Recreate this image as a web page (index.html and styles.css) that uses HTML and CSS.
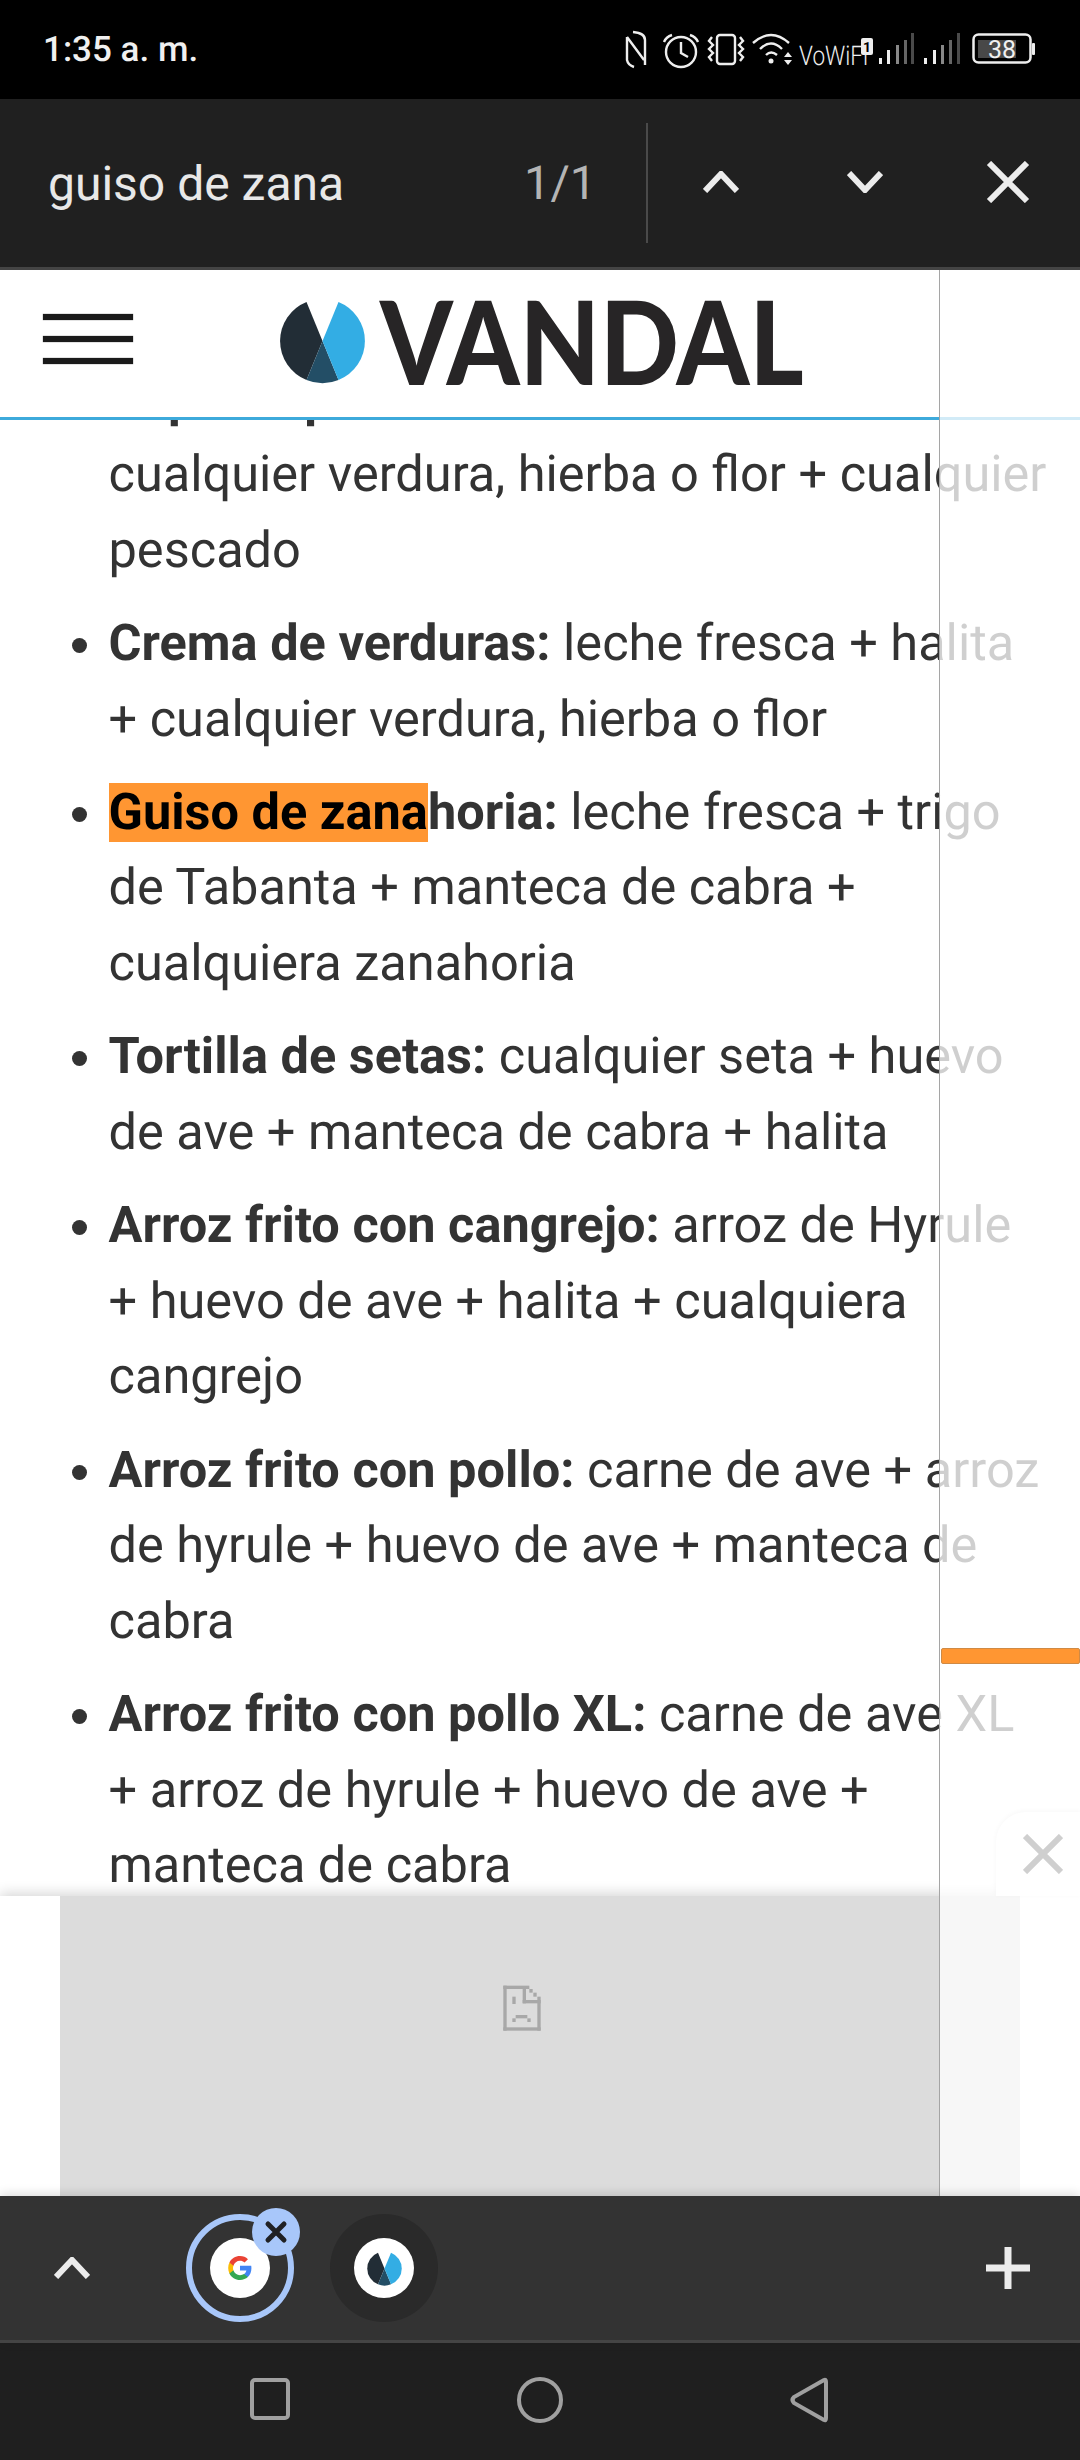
FILE: index.html
```html
<!DOCTYPE html>
<html lang="es">
<head>
<meta charset="utf-8">
<title>Vandal</title>
<link rel="stylesheet" href="styles.css">
</head>
<body>
<div class="phone">
  <div class="status">
    <span class="time">1:35 a. m.</span>
    <svg class="status-icons" viewBox="620 25 420 50" width="420" height="50">
      <g class="si">
        <path d="M627 37V60Q628 65 634 67M627 37L644 60M633 32Q645 33 645 40V65"/>
        <circle cx="681" cy="52" r="15"/>
        <path d="M681 42V53L688 57M664 42Q666 37 672 35M698 42Q696 37 690 35"/>
        <rect x="717" y="35" width="18" height="29" rx="3"/>
        <path d="M712 37L709 41L713 45L709 49L713 53L709 57L712 61M740 37L743 41L739 45L743 49L739 53L743 57L740 61"/>
        <path d="M753 43Q771 27 789 43M760 49Q771 38 782 49M766 55Q771 50 777 55"/>
      </g>
      <circle class="sf" cx="771" cy="61" r="2.5"/>
      <path class="sf" d="M788 52L792 57H784ZM788 65L792 60H784Z"/>
      <text class="vowifi" x="799" y="65" textLength="69" lengthAdjust="spacingAndGlyphs">VoWiFi</text>
      <rect class="sf" x="861" y="38" width="12" height="17" rx="2"/>
      <text class="simnum" x="867" y="52">1</text>
      <g class="bars">
        <rect class="b1" x="879" y="58" width="3" height="6"/>
        <rect class="b1" x="887" y="50" width="3" height="14"/>
        <rect class="b2" x="896" y="45" width="3" height="19"/>
        <rect class="b3" x="904" y="40" width="3" height="24"/>
        <rect class="b4" x="911" y="33" width="3" height="31"/>
        <rect class="b1" x="924" y="58" width="3" height="6"/>
        <rect class="b1" x="933" y="50" width="3" height="14"/>
        <rect class="b2" x="941" y="45" width="3" height="19"/>
        <rect class="b3" x="949" y="40" width="3" height="24"/>
        <rect class="b4" x="957" y="33" width="3" height="31"/>
      </g>
      <rect class="batfill" x="978" y="40" width="38" height="18"/>
      <rect class="batbox" x="973.5" y="34.5" width="57" height="28" rx="5"/>
      <rect class="sf" x="1032" y="43" width="3" height="12" rx="1"/>
      <text class="batnum" x="1002" y="58">38</text>
    </svg>
  </div>

  <div class="findbar">
    <span class="query">guiso de zana</span>
    <span class="count">1/1</span>
    <span class="divider"></span>
    <svg class="fb-chev up" viewBox="0 0 36 22" width="36" height="22"><path d="M2 20L18 3L34 20"/></svg>
    <svg class="fb-chev down" viewBox="0 0 36 22" width="36" height="22"><path d="M2 2L18 19L34 2"/></svg>
    <svg class="fb-close" viewBox="0 0 44 42" width="44" height="42"><path d="M3 2L41 40M41 2L3 40"/></svg>
  </div>

  <div class="rule"></div>

  <main class="page">
    <header class="site-head">
      <div class="burger"><i></i><i></i><i></i></div>
      <div class="brand">
        <svg class="mark" viewBox="-43 -43 86 86" width="87" height="86">
          <path class="m-dark" d="M0 0L-16 -39A42 42 0 0 0 -16 39Z"/>
          <path class="m-mid" d="M0 0L-16 39A42 42 0 0 0 16 39Z"/>
          <path class="m-blue" d="M0 0L16 -39A42 42 0 0 1 16 39Z"/>
        </svg>
        <span class="wordmark">VANDAL</span>
      </div>
    </header>

    <ul class="recipes">
      <li><b>Sopa de pescado:</b> leche fresca + halita + cualquier verdura, hierba o flor + cualquier pescado</li>
      <li><b>Crema de verduras:</b> leche fresca + halita + cualquier verdura, hierba o flor</li>
      <li><b><mark class="hit">Guiso de zana</mark>horia:</b> leche fresca + trigo de Tabanta + manteca de cabra + cualquiera zanahoria</li>
      <li><b>Tortilla de setas:</b> cualquier seta + huevo de ave + manteca de cabra + halita</li>
      <li><b>Arroz frito con cangrejo:</b> arroz de Hyrule + huevo de ave + halita + cualquiera cangrejo</li>
      <li><b>Arroz frito con pollo:</b> carne de ave + arroz de hyrule + huevo de ave + manteca de cabra</li>
      <li><b>Arroz frito con pollo XL:</b> carne de ave XL + arroz de hyrule + huevo de ave + manteca de cabra</li>
    </ul>

    <aside class="ad">
      <div class="ad-close">
        <svg viewBox="0 0 40 40" width="40" height="40"><path d="M2 2L38 38M38 2L2 38"/></svg>
      </div>
      <div class="ad-slot">
        <svg class="broken" viewBox="0 0 300 300" width="100" height="100">
          <rect x="100" y="77" width="10" height="135"/>
          <rect x="100" y="77" width="78" height="10"/>
          <rect x="100" y="202" width="112" height="10"/>
          <rect x="202" y="110" width="10" height="102"/>
          <rect x="158" y="87" width="10" height="43"/>
          <rect x="158" y="120" width="54" height="10"/>
          <rect x="178" y="87" width="10" height="11"/>
          <rect x="190" y="98" width="10" height="12"/>
          <rect x="127" y="110" width="10" height="22"/>
          <rect x="137" y="165" width="35" height="10"/>
          <rect x="127" y="175" width="10" height="11"/>
          <rect x="172" y="175" width="10" height="11"/>
        </svg>
      </div>
    </aside>

    <div class="find-track"><span class="find-mark"></span></div>
  </main>

  <div class="tabstrip">
    <svg class="ts-chev" viewBox="0 0 36 22" width="36" height="22"><path d="M2 20L18 3L34 20"/></svg>
    <div class="tab active">
      <span class="fav">
        <svg viewBox="0 0 48 48" width="26" height="26">
          <path fill="#4285F4" d="M45.1 24.5c0-1.6-.1-3.1-.4-4.5H24v8.5h11.8c-.5 2.8-2.1 5.1-4.4 6.7v5.5h7.1c4.2-3.8 6.6-9.5 6.6-16.2z"/>
          <path fill="#34A853" d="M24 46c5.9 0 10.9-2 14.5-5.3l-7.1-5.5c-2 1.3-4.5 2.1-7.4 2.1-5.7 0-10.5-3.8-12.2-9H4.5v5.7C8.1 41.1 15.5 46 24 46z"/>
          <path fill="#FBBC05" d="M11.8 28.3c-.4-1.3-.7-2.8-.7-4.3s.3-3 .7-4.3V14H4.5C3 17 2.2 20.4 2.2 24s.8 7 2.3 10l7.3-5.7z"/>
          <path fill="#EA4335" d="M24 10.7c3.2 0 6.1 1.1 8.4 3.3l6.3-6.3C34.9 4.1 29.9 2 24 2 15.5 2 8.1 6.9 4.5 14l7.3 5.7c1.7-5.2 6.5-9 12.2-9z"/>
        </svg>
      </span>
      <span class="tab-x">
        <svg viewBox="0 0 24 24" width="24" height="24"><path d="M4 4L20 20M20 4L4 20"/></svg>
      </span>
    </div>
    <div class="tab">
      <span class="fav">
        <svg viewBox="-43 -43 86 86" width="35" height="35">
          <path class="m-dark" d="M0 0L-16 -39A42 42 0 0 0 -16 39Z"/>
          <path class="m-mid" d="M0 0L-16 39A42 42 0 0 0 16 39Z"/>
          <path class="m-blue" d="M0 0L16 -39A42 42 0 0 1 16 39Z"/>
        </svg>
      </span>
    </div>
    <svg class="ts-plus" viewBox="0 0 44 42" width="44" height="42"><path d="M22 0V42M0 21H44"/></svg>
  </div>

  <nav class="sysnav">
    <svg viewBox="0 0 44 46" width="44" height="46"><rect x="4" y="4" width="36" height="38" rx="3"/></svg>
    <svg viewBox="0 0 48 48" width="48" height="48"><circle cx="24" cy="24" r="21"/></svg>
    <svg viewBox="0 0 42 48" width="42" height="48"><path d="M36 4Q38 3 38 6V42Q38 45 36 44L6 27Q3 24 6 21Z"/></svg>
  </nav>
</div>
</body>
</html>
```
FILE: styles.css
```css
* { box-sizing: border-box; }
html, body { margin: 0; padding: 0; }
body { font-family: Roboto, "Noto Sans", sans-serif; text-rendering: geometricPrecision; }

.phone {
  width: 1080px;
  height: 2460px;
  display: flex;
  flex-direction: column;
  overflow: hidden;
  background: #000;
}

/* status bar */
.status {
  height: 99px;
  flex: none;
  background: #000;
  display: flex;
  align-items: flex-start;
  justify-content: space-between;
  padding: 25px 40px 0 43px;
}
.time { color: #f0f0f0; font-size: 35px; font-weight: 500; line-height: 50px; }
.si { fill: none; stroke: #eee; stroke-width: 2.4; }
.sf { fill: #eee; }
.vowifi { fill: #eee; font-size: 27px; font-weight: 300; }
.simnum { fill: #000; font-size: 14px; font-weight: 700; text-anchor: middle; }
.b1 { fill: #eee; }
.b2 { fill: #888; }
.b3 { fill: #666; }
.b4 { fill: #4a4a4a; }
.batfill { fill: #484848; }
.batbox { fill: none; stroke: #eee; stroke-width: 2.5; }
.batnum { fill: #f0f0f0; font-size: 25px; text-anchor: middle; }

/* find in page */
.findbar {
  height: 168px;
  flex: none;
  background: #202020;
  display: flex;
  align-items: center;
  position: relative;
  padding-left: 48px;
}
.query { color: #e8e8e8; font-size: 48px; width: 476px; }
.count { color: #b4b4b4; font-size: 47px; width: 122px; }
.divider { width: 2px; height: 120px; background: #4a4a4a; margin-right: 55px; }
.fb-chev path, .ts-chev path { fill: none; stroke: #ececec; stroke-width: 6; }
.fb-chev.up { margin-right: 108px; margin-top: -2px; }
.fb-chev.down { margin-right: 103px; margin-top: -2px; }
.fb-close path { fill: none; stroke: #ececec; stroke-width: 6; }
.fb-close { margin-top: -2px; }

.rule { height: 3px; flex: none; background: #444; }

/* page */
.page {
  position: relative;
  flex: 1;
  min-height: 0;
  overflow: hidden;
  background: #fff;
}
.site-head {
  position: relative;
  z-index: 1;
  height: 150px;
  background: #fff;
  border-bottom: 3px solid #3daadb;
  display: flex;
  align-items: flex-start;
}
.burger {
  width: 90px;
  margin: 44px 0 0 43px;
  display: flex;
  flex-direction: column;
  gap: 16px;
}
.burger i { display: block; height: 6px; background: #1a1a1a; box-shadow: 0 0 1px #555; }
.brand { display: flex; align-items: center; margin: 28px 0 0 146px; }
.mark { flex: none; display: block; }
.m-dark { fill: #222d36; }
.m-mid { fill: #234e66; }
.m-blue { fill: #33ade4; }
.wordmark {
  font-family: Lato, "Open Sans", sans-serif;
  font-weight: 900;
  font-size: 116px;
  line-height: 86px;
  color: #272526;
  margin-left: 14px;
  display: inline-block;
  transform-origin: left center;
  transform: scaleX(.895);
}

.recipes {
  margin: -58.5px 0 0;
  padding: 0 32px 0 108.5px;
  list-style: disc;
  color: #333;
  font-size: 50.5px;
  line-height: 75.6px;
}
.recipes li { margin-bottom: 17.7px; }
.recipes b { font-weight: 700; }
.hit {
  background: #ff9632;
  color: #000;
}

/* bottom ad */
.ad {
  position: absolute;
  left: 0;
  right: 0;
  bottom: 0;
  height: 300px;
  z-index: 2;
  background: #fff;
  padding: 0 60px;
  box-shadow: 0 -3px 12px rgba(0, 0, 0, .16);
}
.ad-close {
  position: absolute;
  right: 0;
  bottom: 100%;
  width: 84px;
  height: 84px;
  background: #fff;
  border-top-left-radius: 30px;
  box-shadow: 0 -1px 5px rgba(0, 0, 0, .14);
  display: flex;
  align-items: center;
  padding-left: 27px;
}
.ad-close path { fill: none; stroke: #333; stroke-width: 6; }
.ad-slot {
  height: 100%;
  background: #dcdcdc;
  display: flex;
  justify-content: center;
  align-items: flex-start;
  padding: 64px 40px 0 0;
}
.broken rect { fill: #a8a8a8; }

/* find track over the page */
.find-track {
  position: absolute;
  top: -3px;
  bottom: 0;
  left: 939px;
  right: 0;
  z-index: 3;
  background: rgba(255, 255, 255, .77);
  border-left: 1px solid #a5a5a5;
}
.find-mark {
  position: absolute;
  top: 1381px;
  left: 1px;
  width: 139px;
  height: 16px;
  background: #ff9632;
  border: 1px solid #cf8a45;
  border-radius: 2px;
}

/* tab strip */
.tabstrip {
  position: relative;
  z-index: 4;
  height: 147px;
  flex: none;
  background: #333;
  border-bottom: 3px solid #444;
  box-shadow: 0 -2px 10px rgba(0, 0, 0, .14);
  display: flex;
  align-items: center;
  padding-left: 54px;
}
.ts-chev { margin-right: 96px; }
.tab {
  width: 108px;
  height: 108px;
  border-radius: 50%;
  background: #2a2a2a;
  display: flex;
  align-items: center;
  justify-content: center;
  position: relative;
  margin-right: 36px;
}
.tab.active { background: transparent; border: 6px solid #a8c7fa; }
.fav {
  width: 60px;
  height: 60px;
  border-radius: 50%;
  background: #fff;
  display: flex;
  align-items: center;
  justify-content: center;
}
.tab-x {
  position: absolute;
  top: -12px;
  right: -12px;
  width: 48px;
  height: 48px;
  border-radius: 50%;
  background: #a8c7fa;
  display: flex;
  align-items: center;
  justify-content: center;
}
.tab-x path { fill: none; stroke: #202124; stroke-width: 5; stroke-linecap: round; }
.ts-plus { margin-left: auto; margin-right: 50px; }
.ts-plus path { fill: none; stroke: #ececec; stroke-width: 7; }

/* system nav */
.sysnav {
  height: 117px;
  flex: none;
  background: #1f1f1f;
  display: flex;
  align-items: flex-start;
  padding: 33px 0 0 248px;
  gap: 224px;
}
.sysnav svg * { fill: none; stroke: #a0a0a0; stroke-width: 4; }
```
